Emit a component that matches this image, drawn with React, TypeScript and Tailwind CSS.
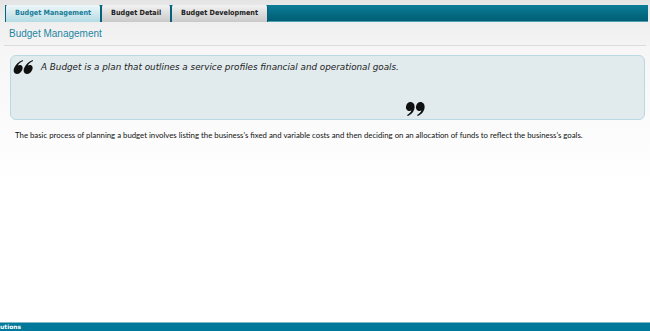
import React from "react";

const tabs = ["Budget Management", "Budget Detail", "Budget Development"];

const comma =
  "M5.5 0 C8 0 10 2.3 9.6 5.4 C9.2 9.2 6.6 12.4 2.6 14 L2.1 12.9 C4.4 11.6 5.9 10.2 6.4 8.5 C5.8 8.8 5.2 9 4.6 9 C2.3 9 0.6 7 1 4.5 C1.3 2 3.2 0 5.5 0 Z";

function CloseQuote({ className = "" }: { className?: string }) {
  return (
    <svg width="20" height="15" viewBox="0 0 20 15" className={className}>
      <path d={comma} fill="#111" />
      <path d={comma} fill="#111" transform="translate(10 0)" />
    </svg>
  );
}

function OpenQuote({ className = "" }: { className?: string }) {
  return (
    <svg width="20" height="15" viewBox="0 0 20 15" className={className}>
      <g transform="rotate(180 10 7.5)">
        <path d={comma} fill="#111" />
        <path d={comma} fill="#111" transform="translate(10 0)" />
      </g>
    </svg>
  );
}

export default function App() {
  return (
    <div className="w-[650px] h-[331px] flex flex-col bg-white overflow-hidden" style={{ fontFamily: "'Liberation Sans', Arial, sans-serif" }}>
      <div className="bg-gradient-to-b from-[#e4e4e4] to-[#efefef] pt-[5px] pl-[5px] pr-[2px]">
        <div className="h-[17px] flex bg-gradient-to-b from-[#0c7d97] to-[#005e73] border-b border-[#4f9fb2]">
          {tabs.map((t, i) => (
            <div
              key={t}
              className={`h-[17px] flex items-center whitespace-nowrap font-bold text-[7.2px] border-x border-[#06627a] rounded-t-[2px] ${
                i === 0
                  ? "w-[96px] pl-[9px] text-[#1a7d98] bg-gradient-to-b from-[#eef7f9] to-[#b5dbe4]"
                  : i === 1
                  ? "w-[70px] pl-[9px] text-[#222] bg-gradient-to-b from-[#f2f2f2] to-[#c9c9c9]"
                  : "w-[97px] pl-[9px] text-[#222] bg-gradient-to-b from-[#f2f2f2] to-[#c9c9c9]"
              }`}
              style={{ fontFamily: "'DejaVu Sans Condensed', 'DejaVu Sans', Verdana, sans-serif" }}
            >
              {t}
            </div>
          ))}
        </div>
      </div>
      <div className="bg-gradient-to-b from-[#efefef] to-[#f4f4f4] px-[4px]">
        <div className="h-[24px] flex items-center pl-[5px] text-[10px] text-[#1f86a2] border-b border-[#dcdcdc]">
          Budget Management
        </div>
      </div>
      <div className="flex-1 bg-gradient-to-b from-[#f6f6f6] via-white to-white pt-[9px] px-[5px]">
        <div className="ml-[5px] h-[65px] rounded-[6px] border border-[#b9d9e2] bg-[#e1eaed] flex flex-col">
          <div className="flex items-start pl-[3px] pt-[3px]">
            <OpenQuote className="-skew-x-12 shrink-0" />
            <span className="ml-[7px] mt-[2px] text-[8.8px] italic text-[#222]" style={{ fontFamily: "'DejaVu Sans', Verdana, sans-serif" }}>
              A Budget is a plan that outlines a service profiles financial and operational goals.
            </span>
          </div>
          <div className="flex-1 flex items-end pl-[394px] pb-[2px]">
            <CloseQuote />
          </div>
        </div>
        <p className="mt-[10px] ml-[10px] text-[7.8px] text-[#111]" style={{ fontFamily: "Lato, sans-serif" }}>
          The basic process of planning a budget involves listing the business's fixed and variable costs and then deciding on an allocation of funds to reflect the business's goals.
        </p>
      </div>
      <div className="h-[9px] bg-[#00789a] border-t border-[#7fb8c8] flex items-center text-[6px] font-bold text-white leading-none" style={{ fontFamily: "'DejaVu Sans', Verdana, sans-serif" }}>
        utions
      </div>
    </div>
  );
}
